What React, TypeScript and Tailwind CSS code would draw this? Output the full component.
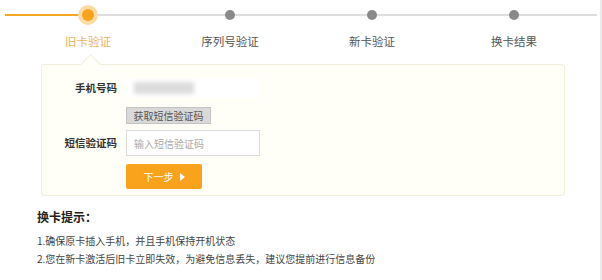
import React from 'react';

const steps = ['旧卡验证', '序列号验证', '新卡验证', '换卡结果'];

const App: React.FC = () => {
  return (
    <div
      className="relative w-[602px] h-[280px] bg-white text-[#333] overflow-hidden border-r-2 border-[#ebebeb]"
      style={{ fontFamily: '"Noto Sans CJK SC", "Noto Sans", sans-serif' }}
    >
      {/* Step bar */}
      <div className="relative h-[56px]">
        <div className="absolute top-[14px] left-[5px] w-[592px] h-[2px] bg-[#dedede]" />
        <div className="absolute top-[14px] left-[5px] w-[83px] h-[2px] bg-[#f5a623]" />
        <div className="relative flex pl-[17px]">
          {steps.map((label, i) => (
            <div key={label} className="w-[142px] flex flex-col items-center">
              <div className="h-[30px] flex items-center justify-center">
                {i === 0 ? (
                  <div className="w-[20px] h-[20px] rounded-full bg-[#fcdca6] flex items-center justify-center">
                    <div className="w-[12px] h-[12px] rounded-full bg-[#f9a21c]" />
                  </div>
                ) : (
                  <div className="w-[10px] h-[10px] rounded-full bg-[#8a8a8a]" />
                )}
              </div>
              <div
                className={`text-[11.5px] leading-[22px] ${
                  i === 0 ? 'text-[#eab25f]' : 'text-[#555]'
                }`}
              >
                {label}
              </div>
            </div>
          ))}
        </div>
      </div>

      {/* Form card */}
      <div className="relative ml-[41px] mt-[8px] w-[524px] h-[132px] bg-[#fffef7] border border-[#f2eed8] rounded-[3px] pt-[13px]">
        <div className="absolute -top-[8px] left-[41px] w-[15px] h-[15px] rotate-45 bg-[#fffef7] border-l border-t border-[#f2eed8]" />
        <div className="relative flex items-center h-[20px]">
          <div className="w-[75px] text-right text-[10.5px] font-bold text-[#333]">手机号码</div>
          <div className="ml-[9px] w-[133px] h-[20px] bg-white flex items-center pl-[8px]">
            <div className="w-[60px] h-[12px] bg-[#dcdcdc] blur-[2px]" />
          </div>
        </div>
        <div className="flex mt-[9px]">
          <div className="w-[75px]" />
          <button className="ml-[9px] w-[85px] h-[17px] bg-[#d9d9d9] border border-[#c4c4c4] text-[10px] leading-[15px] text-[#555]">
            获取短信验证码
          </button>
        </div>
        <div className="flex items-center mt-[6px]">
          <div className="w-[75px] text-right text-[10.5px] font-bold text-[#333]">短信验证码</div>
          <div className="ml-[9px] w-[134px] h-[26px] bg-white border border-[#dcdcdc] flex items-center pl-[7px] text-[10px] text-[#aaa]">
            输入短信验证码
          </div>
        </div>
        <div className="flex mt-[8px]">
          <div className="w-[75px]" />
          <button className="ml-[9px] w-[76px] h-[25px] bg-[#f9a21c] rounded-[2px] flex items-center justify-center gap-[6px] text-[10px] text-white">
            <span>下一步</span>
            <svg width="5" height="8" viewBox="0 0 5 8">
              <path d="M0 0 L5 4 L0 8 Z" fill="#fff" />
            </svg>
          </button>
        </div>
      </div>

      {/* Tips */}
      <div className="pl-[37px] mt-[12px]">
        <div className="text-[12px] font-bold leading-[18px] text-[#222]">换卡提示：</div>
        <div className="mt-[6px] text-[10px] leading-[18px] text-[#444]">1.确保原卡插入手机，并且手机保持开机状态</div>
        <div className="text-[10px] leading-[18px] text-[#444]">2.您在新卡激活后旧卡立即失效，为避免信息丢失，建议您提前进行信息备份</div>
      </div>
    </div>
  );
};

export default App;
